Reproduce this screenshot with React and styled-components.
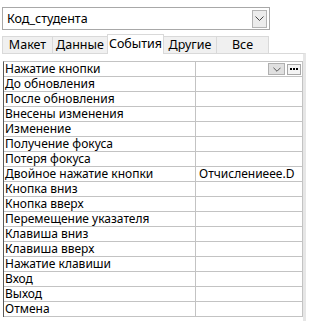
import React from "react";
import styled, { createGlobalStyle } from "styled-components";

const Global = createGlobalStyle`
  body {
    margin: 0;
    background: #ffffff;
    font-family: "Noto Sans", "Open Sans", sans-serif;
    color: #000;
  }
`;

const Wrapper = styled.div`
  width: 315px;
  height: 321px;
  padding: 7px 0 0 2px;
  box-sizing: border-box;
  overflow: hidden;
`;

const Combo = styled.div`
  width: 268px;
  height: 23px;
  box-sizing: border-box;
  border: 1px solid #a8a8a8;
  display: flex;
  align-items: center;
  justify-content: space-between;
  padding: 0 2px 0 4px;
  font-size: 12.5px;
`;

const ComboButton = styled.div`
  width: 15px;
  height: 18px;
  box-sizing: border-box;
  border: 1px solid #b4b4b4;
  background: #ececec;
  display: flex;
  align-items: center;
  justify-content: center;
`;

const Tabs = styled.div`
  display: flex;
  align-items: flex-end;
  margin-top: 3px;
  height: 20px;
`;

const Tab = styled.div`
  width: ${(p) => p.$w}px;
  height: ${(p) => (p.$active ? 20 : 17)}px;
  box-sizing: border-box;
  background: ${(p) => (p.$active ? "#ffffff" : "#f0f0f0")};
  border: 1px solid #d9d9d9;
  border-bottom: none;
  border-left: ${(p) => (p.$first || p.$active ? "1px solid #d9d9d9" : "none")};
  border-right: ${(p) => (p.$beforeActive ? "none" : "1px solid #d9d9d9")};
  display: flex;
  align-items: ${(p) => (p.$active ? "flex-start" : "center")};
  justify-content: center;
  font-size: 12.5px;
  line-height: 16px;
  padding-top: ${(p) => (p.$active ? "1px" : "0")};
  position: relative;
  z-index: ${(p) => (p.$active ? 1 : 0)};
  margin-bottom: ${(p) => (p.$active ? "-1px" : "0")};
`;

const Panel = styled.div`
  width: 304px;
  height: 270px;
  box-sizing: border-box;
  border-top: 1px solid #d9d9d9;
  border-right: 3px solid #e6e6e6;
  padding: 7px 0 0 1px;
`;

const Grid = styled.div`
  display: grid;
  grid-template-columns: 192px 107px;
  border-top: 1px solid #c3c3c3;
  border-left: 1px solid #5a5a5a;
  width: 299px;
`;

const Cell = styled.div`
  height: 14px;
  border-bottom: 1px solid #c3c3c3;
  border-right: 1px solid #c3c3c3;
  font-size: 12px;
  line-height: 14px;
  padding-left: ${(p) => (p.$value ? "3px" : "1px")};
  white-space: nowrap;
  display: flex;
  align-items: center;
  justify-content: ${(p) => (p.$tools ? "flex-end" : "flex-start")};
  gap: 2px;
  padding-right: ${(p) => (p.$tools ? "1px" : "0")};
`;

const DropBtn = styled.div`
  width: 17px;
  height: 12px;
  box-sizing: border-box;
  background: #e0e0e0;
  border: 1px solid #b0b0b0;
  display: flex;
  align-items: center;
  justify-content: center;
`;

const DotsBtn = styled.div`
  width: 14px;
  height: 11px;
  box-sizing: border-box;
  background: #f4f4f4;
  border: 1px solid #a8a8a8;
  display: flex;
  align-items: center;
  justify-content: center;
  gap: 1px;
`;

const Dot = styled.span`
  width: 2px;
  height: 2px;
  background: #000;
`;

const Chevron = ({ w = 9, h = 5 }) => (
  <svg width={w} height={h} viewBox="0 0 9 5">
    <path d="M0.5 0.5 L4.5 4.5 L8.5 0.5" fill="none" stroke="#444" strokeWidth="1" />
  </svg>
);

const events = [
  ["Нажатие кнопки", ""],
  ["До обновления", ""],
  ["После обновления", ""],
  ["Внесены изменения", ""],
  ["Изменение", ""],
  ["Получение фокуса", ""],
  ["Потеря фокуса", ""],
  ["Двойное нажатие кнопки", "Отчислениеее.D"],
  ["Кнопка вниз", ""],
  ["Кнопка вверх", ""],
  ["Перемещение указателя", ""],
  ["Клавиша вниз", ""],
  ["Клавиша вверх", ""],
  ["Нажатие клавиши", ""],
  ["Вход", ""],
  ["Выход", ""],
  ["Отмена", ""],
];

const tabs = [
  { label: "Макет", w: 51 },
  { label: "Данные", w: 54 },
  { label: "События", w: 57 },
  { label: "Другие", w: 53 },
  { label: "Все", w: 52 },
];

const App = () => {
  const active = 2;
  return (
    <>
      <Global />
      <Wrapper>
        <Combo>
          <span>Код_студента</span>
          <ComboButton>
            <Chevron />
          </ComboButton>
        </Combo>
        <Tabs>
          {tabs.map((t, i) => (
            <Tab
              key={t.label}
              $w={t.w}
              $first={i === 0}
              $active={i === active}
              $beforeActive={i === active - 1}
            >
              {t.label}
            </Tab>
          ))}
        </Tabs>
        <Panel>
          <Grid>
            {events.map(([name, value], i) => (
              <React.Fragment key={name}>
                <Cell>{name}</Cell>
                {i === 0 ? (
                  <Cell $tools>
                    <DropBtn>
                      <Chevron w={8} h={5} />
                    </DropBtn>
                    <DotsBtn>
                      <Dot />
                      <Dot />
                      <Dot />
                    </DotsBtn>
                  </Cell>
                ) : (
                  <Cell $value>{value}</Cell>
                )}
              </React.Fragment>
            ))}
          </Grid>
        </Panel>
      </Wrapper>
    </>
  );
};

export default App;
